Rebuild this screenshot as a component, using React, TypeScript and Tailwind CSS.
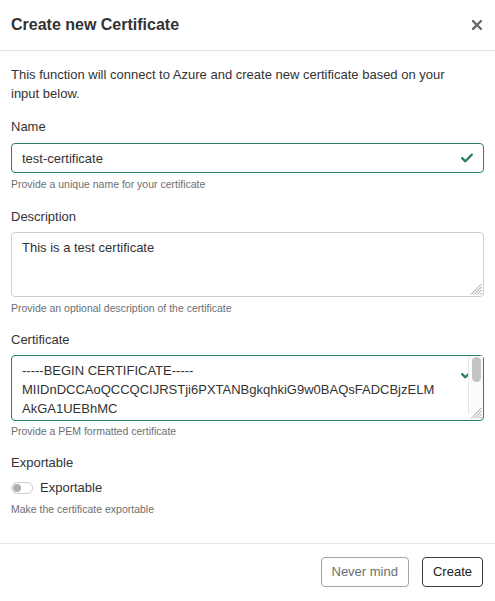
import React, { useState } from 'react'

const GREEN = '#2b7d64'

const Check = ({ className }: { className?: string }) => (
    <svg className={className} width="12" height="10" viewBox="0 0 12 10" fill="none">
        <path d="M1.2 5.2 L4.4 8.3 L10.8 1.6" stroke={GREEN} strokeWidth="2.3" strokeLinecap="round" strokeLinejoin="round" />
    </svg>
)

const Grip = () => (
    <svg className="absolute right-[2px] bottom-[2px] pointer-events-none" width="12" height="12" viewBox="0 0 12 12">
        <g stroke="#9a9a9a" strokeWidth="1">
            <line x1="11.5" y1="1" x2="1" y2="11.5" />
            <line x1="11.5" y1="4" x2="4" y2="11.5" />
            <line x1="11.5" y1="7" x2="7" y2="11.5" />
            <line x1="11.5" y1="10" x2="10" y2="11.5" />
        </g>
    </svg>
)

const Help = ({ children, className = '' }: { children: React.ReactNode; className?: string }) => (
    <p className={`text-[10.5px] leading-[15px] text-[#6b6f73] ${className}`}>{children}</p>
)

const certText = `-----BEGIN CERTIFICATE-----
MIIDnDCCAoQCCQCIJRSTji6PXTANBgkqhkiG9w0BAQsFADCBjzELM
AkGA1UEBhMC
TkwxEzARBgNVBAgMClNvbWUtU3RhdGUxEjAQBgNVBAcMCUFtc3Rl
-----END CERTIFICATE-----`

export default function App() {
    const [name, setName] = useState('test-certificate')
    const [description, setDescription] = useState('This is a test certificate')
    const [cert, setCert] = useState(certText)
    const [exportable, setExportable] = useState(false)

    return (
        <div className="w-[495px] h-[601px] bg-white flex flex-col font-['Liberation_Sans',Arial,sans-serif] text-[#333]">
            {/* Header */}
            <div className="h-[51px] border-b border-[#e3e3e3] flex items-center justify-between pl-[11px] pr-[13px]">
                <h1 className="text-[16px] font-bold text-[#333]">Create new Certificate</h1>
                <button className="w-[10px] h-[10px] flex items-center justify-center">
                    <svg width="10" height="10" viewBox="0 0 10 10">
                        <path d="M1 1 L9 9 M9 1 L1 9" stroke="#6a6a6a" strokeWidth="2.4" strokeLinecap="square" />
                    </svg>
                </button>
            </div>

            {/* Body */}
            <div className="flex-1 px-[11px] pt-[14px] text-[13px]">
                <p className="leading-[19px] max-w-[455px]">
                    This function will connect to Azure and create new certificate based on your input below.
                </p>

                <label className="block mt-[14px] leading-[19px]">Name</label>
                <div className="relative mt-[7px]">
                    <input
                        value={name}
                        onChange={(e) => setName(e.target.value)}
                        className="w-full h-[30px] rounded-[4px] border border-[#2b7d64] pl-[10px] pr-[30px] text-[13px] text-[#333] outline-none"
                    />
                    <Check className="absolute right-[11px] top-[10px]" />
                </div>
                <Help className="mt-[4px]">Provide a unique name for your certificate</Help>

                <label className="block mt-[15px] leading-[19px]">Description</label>
                <div className="relative mt-[6px]">
                    <textarea
                        value={description}
                        onChange={(e) => setDescription(e.target.value)}
                        className="block w-full h-[65px] resize-none rounded-[4px] border border-[#cfcfcf] px-[10px] pt-[5px] text-[13px] leading-[19px] text-[#333] outline-none"
                    />
                    <Grip />
                </div>
                <Help className="mt-[4px]">Provide an optional description of the certificate</Help>

                <label className="block mt-[14px] leading-[19px]">Certificate</label>
                <div className="relative mt-[6px]">
                    <textarea
                        value={cert}
                        wrap="off"
                        onChange={(e) => setCert(e.target.value)}
                        className="block w-full h-[66px] resize-none overflow-hidden rounded-[4px] border border-[#2b7d64] pl-[10px] pr-[30px] pt-[5px] text-[13px] leading-[19px] text-[#333] outline-none"
                    />
                    <Check className="absolute right-[11px] top-[14px]" />
                    {/* scrollbar */}
                    <div className="absolute top-[1px] right-[1px] bottom-[7px] w-[15px] bg-[#fbfbfb] border-l border-[#e6e6e6] pt-[1px] pl-[3px]">
                        <div className="w-[9px] h-[25px] rounded-full bg-[#c3c3c3]" />
                    </div>
                    <Grip />
                </div>
                <Help className="mt-[3px]">Provide a PEM formatted certificate</Help>

                <label className="block mt-[14px] leading-[19px]">Exportable</label>
                <div className="mt-[6px] h-[19px] flex items-center gap-[7px]">
                    <button
                        onClick={() => setExportable(!exportable)}
                        className="w-[22px] h-[12px] rounded-full border border-[#cdcdcd] bg-white flex items-center px-[1px]"
                    >
                        <span className="w-[8px] h-[8px] rounded-full bg-[#adadad]" />
                    </button>
                    <span className="text-[13px]">Exportable</span>
                </div>
                <Help className="mt-[5px]">Make the certificate exportable</Help>
            </div>

            {/* Footer */}
            <div className="border-t border-[#e3e3e3] pt-[13px] pb-[14px] pr-[12px] flex justify-end gap-[13px]">
                <button className="h-[30px] px-[10px] rounded-[4px] border border-[#a5a5a5] text-[13px] text-[#6b6f73]">
                    Never mind
                </button>
                <button className="h-[30px] px-[10px] rounded-[4px] border border-[#3a3a3a] text-[13px] text-[#222]">
                    Create
                </button>
            </div>
        </div>
    )
}
